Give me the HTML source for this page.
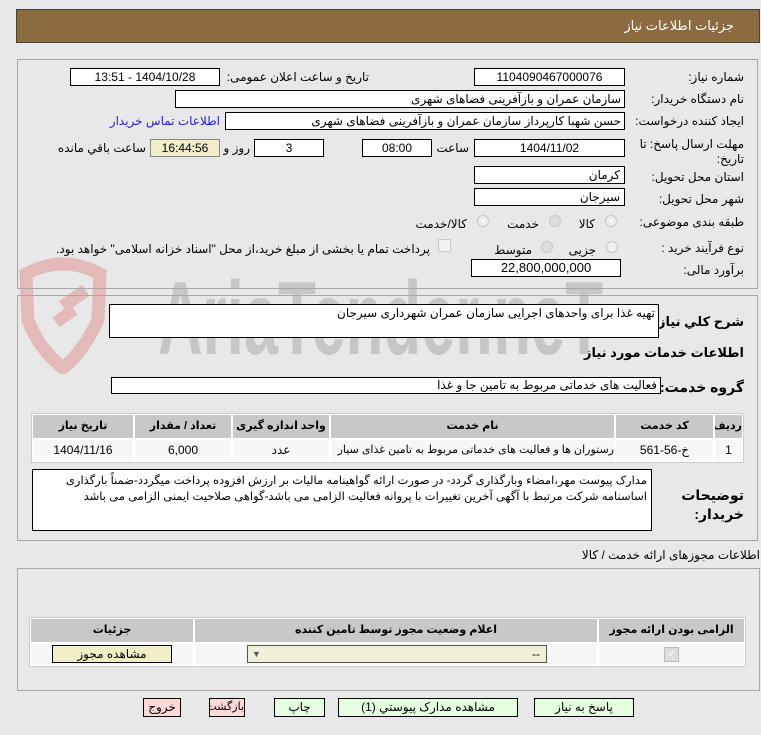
<!DOCTYPE html>
<html><head><meta charset="utf-8"><style>
body{margin:0;width:761px;height:735px;background:#E8E8E8;font-family:"Liberation Sans","DejaVu Sans",sans-serif;font-size:12px;color:#000;position:relative;overflow:hidden}
.a{position:absolute;white-space:nowrap}
.box{position:absolute;background:#fff;border:1px solid #000;box-sizing:border-box;font-size:12px;line-height:16px;direction:rtl;text-align:center;white-space:nowrap;overflow:hidden}
.panel{position:absolute;border:1px solid #a8a8a8;box-sizing:border-box}
.lbl{position:absolute;direction:rtl;text-align:right;font-size:12px;white-space:nowrap;line-height:16px}
.rad{position:absolute;width:12px;height:12px;border-radius:50%;border:1px solid #c8c8c8;background:#f0f0f0;box-sizing:border-box}
.th{position:absolute;background:#C8C8C8;font-weight:bold;font-size:11px;text-align:center;line-height:23px;direction:rtl;white-space:nowrap;overflow:hidden}
.td{position:absolute;background:#F7F7F7;font-size:12px;text-align:center;line-height:21px;direction:rtl;white-space:nowrap;overflow:hidden}
.btn{position:absolute;border:1px solid #000;box-sizing:border-box;height:19px;font-size:12px;line-height:17px;text-align:center;direction:rtl;white-space:nowrap;overflow:hidden}
</style></head><body>
<div class="a" style="left:16px;top:9px;width:744px;height:34px;background:#8B6B3F;border:1px solid #444;box-sizing:border-box"></div>
<div class="lbl" style="right:27px;top:18px;color:#fff;font-size:13px">جزئیات اطلاعات نیاز</div>

<!-- watermark -->
<svg class="a" style="left:18px;top:252px" width="90" height="122" viewBox="0 0 90 122"><path d="M8 22 Q45 2 82 22 L80 68 Q65 100 45 116 Q20 96 10 68Z" fill="none" stroke="#E3B9B9" stroke-width="13"/><rect x="42" y="40" width="28" height="13" fill="#E3B9B9" transform="rotate(-35 56 46)"/><rect x="36" y="58" width="22" height="12" fill="#E3B9B9" transform="rotate(-35 47 64)"/></svg>
<svg class="a" style="left:158px;top:270px" width="450" height="90"><text x="0" y="84" font-family="Liberation Sans Narrow, Liberation Sans, sans-serif" font-weight="bold" font-size="104" fill="#C6C6C6" textLength="445" lengthAdjust="spacingAndGlyphs">AriaTender.neT</text></svg>

<div class="panel" style="left:17px;top:59px;width:741px;height:230px"></div>
<div class="lbl" style="right:17px;top:69px">شماره نیاز:</div>
<div class="box" style="left:474px;top:68px;width:151px;height:18px">1104090467000076</div>
<div class="lbl" style="right:392px;top:69px">تاریخ و ساعت اعلان عمومی:</div>
<div class="box" style="left:70px;top:68px;width:150px;height:18px">1404/10/28 - 13:51</div>

<div class="lbl" style="right:17px;top:91px">نام دستگاه خریدار:</div>
<div class="box" style="left:175px;top:90px;width:450px;height:18px;text-align:right;padding-right:3px">سازمان عمران و بازآفرینی فضاهای شهری</div>

<div class="lbl" style="right:17px;top:113px">ایجاد کننده درخواست:</div>
<div class="box" style="left:225px;top:112px;width:400px;height:18px;text-align:right;padding-right:3px">حسن شهبا کارپرداز سازمان عمران و بازآفرینی فضاهای شهری</div>
<div class="lbl" style="right:541px;top:113px;color:#2222DD">اطلاعات تماس خریدار</div>

<div class="lbl" style="right:17px;top:134px;line-height:20px">مهلت ارسال پاسخ: تا</div>
<div class="lbl" style="right:17px;top:151px">تاریخ:</div>
<div class="box" style="left:474px;top:139px;width:151px;height:18px">1404/11/02</div>
<div class="lbl" style="right:292px;top:140px">ساعت</div>
<div class="box" style="left:362px;top:139px;width:70px;height:18px">08:00</div>
<div class="box" style="left:254px;top:139px;width:70px;height:18px">3</div>
<div class="lbl" style="right:511px;top:140px">روز و</div>
<div class="box" style="left:150px;top:139px;width:70px;height:18px;background:#F0EFC8;border-color:#888">16:44:56</div>
<div class="lbl" style="right:615px;top:140px">ساعت باقي مانده</div>

<div class="lbl" style="right:17px;top:169px">استان محل تحویل:</div>
<div class="box" style="left:474px;top:166px;width:151px;height:18px;text-align:right;padding-right:4px">کرمان</div>
<div class="lbl" style="right:17px;top:191px">شهر محل تحویل:</div>
<div class="box" style="left:474px;top:188px;width:151px;height:18px;text-align:right;padding-right:4px">سیرجان</div>

<div class="lbl" style="right:17px;top:214px">طبقه بندی موضوعی:</div>
<div class="rad" style="left:605px;top:215px"></div><div class="lbl" style="right:166px;top:216px">کالا</div>
<div class="rad" style="left:549px;top:215px;background:#ddd"></div><div class="lbl" style="right:222px;top:216px">خدمت</div>
<div class="rad" style="left:477px;top:215px"></div><div class="lbl" style="right:294px;top:216px">کالا/خدمت</div>

<div class="lbl" style="right:17px;top:240px">نوع فرآیند خرید :</div>
<div class="rad" style="left:606px;top:241px"></div><div class="lbl" style="right:165px;top:242px">جزیی</div>
<div class="rad" style="left:541px;top:241px;background:#ddd"></div><div class="lbl" style="right:229px;top:242px">متوسط</div>
<div class="a" style="left:438px;top:239px;width:11px;height:11px;border:1px solid #c8c8c8;background:#f2f2f2"></div>
<div class="lbl" style="right:331px;top:241px">پرداخت تمام یا بخشی از مبلغ خرید،از محل "اسناد خزانه اسلامی" خواهد بود.</div>

<div class="lbl" style="right:17px;top:262px">برآورد مالی:</div>
<div class="box" style="left:471px;top:259px;width:150px;height:18px;font-size:13px">22,800,000,000</div>

<div class="panel" style="left:17px;top:295px;width:741px;height:246px"></div>
<div class="lbl" style="right:17px;top:314px;font-weight:bold;font-size:13px">شرح کلي نیاز:</div>
<div class="box" style="left:109px;top:304px;width:550px;height:34px;text-align:right;padding-right:3px">تهیه غذا برای واحدهای اجرایی سازمان عمران شهرداری سیرجان</div>
<div class="lbl" style="right:17px;top:345px;font-weight:bold;font-size:13px">اطلاعات خدمات مورد نیاز</div>
<div class="lbl" style="right:17px;top:379px;font-weight:bold;font-size:14px">گروه خدمت:</div>
<div class="box" style="left:111px;top:377px;width:550px;height:17px;text-align:right;padding-right:3px;line-height:15px">فعالیت های خدماتی مربوط به تامین جا و غذا</div>

<div class="a" style="left:31px;top:413px;width:713px;height:50px;background:#fff;border:1px solid #ccc;box-sizing:border-box"></div>
<div class="th" style="left:715px;top:415px;width:27px;height:23px">ردیف</div>
<div class="th" style="left:616px;top:415px;width:97px;height:23px">کد خدمت</div>
<div class="th" style="left:331px;top:415px;width:283px;height:23px">نام خدمت</div>
<div class="th" style="left:233px;top:415px;width:96px;height:23px">واحد اندازه گیری</div>
<div class="th" style="left:135px;top:415px;width:96px;height:23px">تعداد / مقدار</div>
<div class="th" style="left:33px;top:415px;width:100px;height:23px">تاریخ نیاز</div>
<div class="td" style="left:715px;top:440px;width:27px;height:21px">1</div>
<div class="td" style="left:616px;top:440px;width:97px;height:21px">خ-56-561</div>
<div class="td" style="left:331px;top:440px;width:283px;height:21px;text-align:right;font-size:11px">رستوران ها و فعالیت های خدماتی مربوط به تامین غذای سیار</div>
<div class="td" style="left:233px;top:440px;width:96px;height:21px">عدد</div>
<div class="td" style="left:135px;top:440px;width:96px;height:21px">6,000</div>
<div class="td" style="left:33px;top:440px;width:100px;height:21px">1404/11/16</div>

<div class="lbl" style="right:17px;top:486px;font-weight:bold;font-size:14px;line-height:19px">توضیحات<br>خریدار:</div>
<div class="box" style="left:32px;top:469px;width:620px;height:62px;text-align:right;padding:3px 4px 0 4px;white-space:normal;line-height:16px;font-size:11.5px">مدارک پیوست مهر،امضاء وبارگذاری گردد- در صورت ارائه گواهینامه مالیات بر ارزش افزوده پرداخت میگردد-ضمناً بارگذاری اساسنامه شرکت مرتبط با آگهی آخرین تغییرات با پروانه فعالیت الزامی می باشد-گواهی صلاحیت ایمنی الزامی می باشد</div>

<div class="lbl" style="right:1px;top:547px">اطلاعات مجوزهای ارائه خدمت / کالا</div>
<div class="panel" style="left:17px;top:568px;width:743px;height:123px"></div>
<div class="a" style="left:29px;top:617px;width:717px;height:50px;background:#fff;border:1px solid #ccc;box-sizing:border-box"></div>
<div class="th" style="left:599px;top:619px;width:145px;height:23px">الزامی بودن ارائه مجوز</div>
<div class="th" style="left:195px;top:619px;width:402px;height:23px">اعلام وضعیت مجوز توسط تامین کننده</div>
<div class="th" style="left:31px;top:619px;width:162px;height:23px">جزئیات</div>
<div class="td" style="left:599px;top:644px;width:145px;height:21px"></div>
<div class="td" style="left:195px;top:644px;width:402px;height:21px"></div>
<div class="td" style="left:31px;top:644px;width:162px;height:21px"></div>
<div class="a" style="left:664px;top:647px;width:13px;height:13px;background:#ddd;border:1px solid #bbb;color:#fff;font-size:11px;line-height:13px;text-align:center">✓</div>
<div class="a" style="left:247px;top:645px;width:300px;height:18px;border:1px solid #555;background:#F0EFD8;box-sizing:border-box;font-size:12px;line-height:16px"><span style="position:absolute;right:6px">--</span><span style="position:absolute;left:4px;font-size:9px;color:#555">▼</span></div>
<div class="btn" style="left:52px;top:645px;width:120px;height:18px;background:#F0EFC8;line-height:16px">مشاهده مجوز</div>

<div class="btn" style="left:534px;top:698px;width:100px;background:#E6FFE0">پاسخ به نیاز</div>
<div class="btn" style="left:338px;top:698px;width:180px;background:#E6FFE0">مشاهده مدارک پیوستي (1)</div>
<div class="btn" style="left:274px;top:698px;width:51px;background:#E6FFE0">چاپ</div>
<div class="btn" style="left:209px;top:698px;width:36px;background:#FFD8D8;font-size:11px">بازگشت</div>
<div class="btn" style="left:143px;top:698px;width:38px;background:#FFD8D8">خروج</div>
</body></html>
